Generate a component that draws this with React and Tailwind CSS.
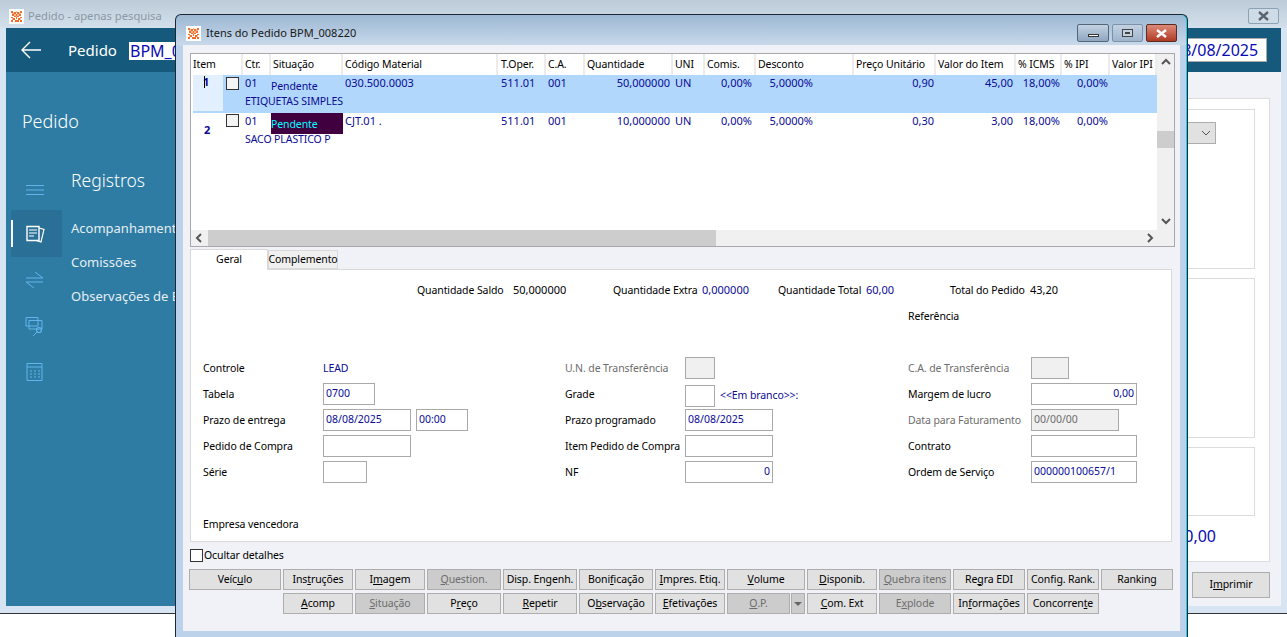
import React from "react";

const COLS = "grid grid-cols-[50px_28px_72px_155px_48px_39px_88px_32px_51px_98px_82px_80px_46px_48px_47px]";

function Logo() {
  const dark = [[2,2],[5,3],[9,3],[12,2],[3,5],[7,5],[11,5],[2,8],[5,7],[9,7],[12,8],[4,10],[7,9],[10,10],[2,12],[6,12],[9,12],[12,12]];
  const light = [[7,2],[3,3],[11,3],[5,5],[9,5],[7,7],[3,10],[11,10],[7,12]];
  return (
    <svg width="15" height="15" viewBox="0 0 16 16" className="shrink-0" shapeRendering="crispEdges">
      <rect width="16" height="16" fill="#fff" />
      {light.map(([x, y], i) => <rect key={"l" + i} x={x} y={y} width="2" height="2" fill="#fbb78f" />)}
      {dark.map(([x, y], i) => <rect key={"d" + i} x={x} y={y} width="2" height="2" fill="#f2702c" />)}
    </svg>
  );
}

function Chev({ d }) {
  const paths = { up: "M2 7 L6 3 L10 7", down: "M2 3 L6 7 L10 3", left: "M7 2 L3 6 L7 10", right: "M3 2 L7 6 L3 10" };
  return (
    <svg width="12" height="12" viewBox="0 0 12 12">
      <path d={paths[d]} stroke="#555" strokeWidth="2" fill="none" />
    </svg>
  );
}

function Head({ children, cls = "" }) {
  return <div className={"h-[21px] flex items-center pt-[1px] pl-[2px] border-r-2 border-[#ececec] whitespace-nowrap overflow-hidden text-black " + cls}>{children}</div>;
}

function Row({ sel, num, code, desc, qty, un, price, total, purple }) {
  const R = ({ children, cls = "" }) => <div className={"text-right whitespace-nowrap " + cls}>{children}</div>;
  return (
    <div className={COLS + " grid-rows-[17px_21px] h-[38px] text-[#0a0a96] text-[11px] tracking-normal leading-[16px] " + (sel ? "bg-[#b1d7fd]" : "bg-white")}>
      <div className="relative flex row-span-2 h-[38px]">
        <div className={"w-[30px] flex font-bold " + (sel ? "bg-[#e1effe] h-[36px] pl-[10px]" : "pt-[9px] pl-[11px]")}>
          <span className={sel ? "mt-[-1px]" : ""}>{num}</span>
        </div>
        <div className={"w-[13px] h-[13px] ml-[3px] border border-[#333] bg-[#f4f4f4] " + (sel ? "mt-[2px]" : "mt-[1px]")} />
        {sel && <div className="absolute left-[11px] top-[1px] w-px h-[12px] bg-black" />}
      </div>
      <div className="pl-[2px]">01</div>
      <div className={"h-[21px] flex items-center text-[10.5px] tracking-[-0.1px] " + (purple ? "bg-[#400040] text-[#00ffff]" : "pt-[1px]")}>Pendente</div>
      <div className="pl-[2px]">{code}</div>
      <div className="pl-[3px]">511.01</div>
      <div className="pl-[2px]">001</div>
      <R cls="pr-[3px]">{qty}</R>
      <div className="pl-[2px]">{un}</div>
      <R cls="pr-[4px]">0,00%</R>
      <R cls="pr-[41px]">5,0000%</R>
      <R cls="pr-[2px]">{price}</R>
      <R cls="pr-[3px]">{total}</R>
      <R cls="pr-[2px]">18,00%</R>
      <R cls="pr-[2px]">0,00%</R>
      <div />
      <div className="col-start-2 col-end-6 row-start-2 pl-[2px] pt-[1px] whitespace-nowrap text-[10.5px] tracking-[-0.1px]">{desc}</div>
    </div>
  );
}

function L({ children, off }) {
  return <div className={"flex items-center h-[22px] pt-[2px] " + (off ? "text-[#6d6d6d]" : "text-black")}>{children}</div>;
}

function Inp({ w, children, right, off }) {
  return (
    <div className={w + " h-[22px] border border-[#a9a9a9] flex items-center px-[2px] shrink-0 tracking-normal " + (right ? "justify-end " : "") + (off ? "bg-[#f0f0f0] text-[#6d6d6d]" : "bg-white text-[#0a0a96]")}>
      {children}
    </div>
  );
}

function Btn({ w, off, children, cls = "" }) {
  return (
    <div className={w + " h-[21px] shrink-0 border border-[#adadad] flex items-center justify-center whitespace-nowrap " + (off ? "bg-[#cccccc] text-[#6d6d6d] " : "bg-[#e1e1e1] text-black ") + cls}>
      {children}
    </div>
  );
}

function Ico({ children }) {
  return (
    <svg width="20" height="20" viewBox="0 0 20 20" fill="none" stroke="#63b4ec" strokeWidth="1">
      {children}
    </svg>
  );
}

export default function App() {
  return (
    <div className="relative w-[1287px] h-[637px] overflow-hidden bg-white font-['Noto_Sans',sans-serif]">
      {/* back window */}
      <div className="h-[614px] border-b border-[#333] bg-[#d7e4f1] flex flex-col px-[6px] pb-[7px]">
        <div className="-mx-[6px] h-[28px] shrink-0 bg-gradient-to-b from-[#bccbd8] to-[#d3e0ec] flex items-center pt-[4px] pl-[9px] pr-[8px] gap-[4px] text-[11.2px] text-[#8a98a6]">
          <Logo />
          <span>Pedido - apenas pesquisa</span>
          <div className="ml-auto w-[31px] h-[16px] border border-[#8ea2b6] rounded-[2px] bg-[#cfdbe7] flex items-center justify-center">
            <svg width="11" height="10" viewBox="0 0 11 10"><path d="M1 1 L10 9 M10 1 L1 9" stroke="#5a6670" strokeWidth="2.4" /></svg>
          </div>
        </div>
        <div className="h-[44px] shrink-0 bg-[#155a7c] flex items-center text-white">
          <svg className="ml-[15px]" width="20" height="18" viewBox="0 0 20 18" fill="none" stroke="#fff" strokeWidth="1.4">
            <path d="M20 9 H1 M9 1 L1 9 L9 17" />
          </svg>
          <span className="ml-[27px] w-[61px] text-[15px]">Pedido</span>
          <div className="w-[60px] h-[18px] bg-white text-[#0a0ab4] text-[16px] leading-[18px] mt-[2px] pl-[1px]">BPM_0</div>
          <div className="ml-auto mr-[14px] w-[100px] h-[24px] bg-white border border-[#a9a9a9] text-[#0a0ab4] text-[16px] flex items-center pl-[5px] whitespace-nowrap">08/08/2025</div>
        </div>
        <div className="flex-1 flex min-h-0">
          <div className="w-[180px] shrink-0 bg-[#2e7ca3] text-white">
            <div className="pl-[16px] pt-[34px] text-[18px] font-light leading-[30px]">Pedido</div>
            <div className="flex mt-[29px]">
              <div className="w-[56px] flex flex-col items-stretch">
                <div className="h-[45px] pl-[20px] pt-[19px]"><svg width="18" height="12" viewBox="0 0 18 12" stroke="#63b4ec"><path d="M0 1.5H18M0 6H18M0 10.5H18" /></svg></div>
                <div className="ml-[5px] h-[47px] bg-[#2a7096] relative flex items-center pl-[15px]">
                  <div className="absolute left-0 top-[10px] w-[2px] h-[27px] bg-white" />
                  <svg width="19" height="18" viewBox="0 0 19 18" fill="none" stroke="#fff">
                    <path d="M1 1.5 H13 V15.5 H1 Z" strokeWidth="1.4" />
                    <path d="M3 5 H11 M3 8 H11 M3 11 H8" strokeWidth="1.2" />
                    <path d="M13 3 L18 4.5 L15 17 L10 15.5" strokeWidth="1.2" />
                  </svg>
                </div>
                <div className="h-[46px] pl-[19px] flex items-center">
                  <Ico><path d="M1 8 H18 M10 2 L18 8 M1 12 H18 M1 12 L9 18" /></Ico>
                </div>
                <div className="h-[46px] pl-[19px] flex items-center">
                  <Ico><path d="M1 1.5 H13 V10 H1 Z M4 4.5 H17 V13 H4 Z" /><circle cx="14" cy="14" r="2.5" strokeWidth="1.2" /><path d="M12 16 L8 20" /></Ico>
                </div>
                <div className="h-[46px] pl-[19px] flex items-center">
                  <Ico><path d="M2 1.5 H17 V18.5 H2 Z M2 5 H17" /><path d="M5 9 H7 M9 9 H11 M13 9 H15 M5 12 H7 M9 12 H11 M13 12 H15 M5 15 H7 M9 15 H11 M13 15 H15" /></Ico>
                </div>
              </div>
              <div className="pl-[9px] mt-[3px] whitespace-nowrap overflow-hidden flex-1 text-[13px] text-[#e4eef4]">
                <div className="text-[17.5px] font-light leading-[24px] text-white">Registros</div>
                <div className="mt-[26px] h-[34px] leading-[20px]">Acompanhamento</div>
                <div className="h-[34px] leading-[20px]">Comissões</div>
                <div className="h-[34px] leading-[20px]">Observações de Entrega</div>
              </div>
            </div>
          </div>
          <div className="flex-1 bg-[#f0f2f8] flex flex-col items-end pr-[11px] pt-[26px]">
            <div className="w-[300px] h-[464px] bg-white border border-[#dcdcdc] pt-[10px] pr-[14px] pl-[10px] flex flex-col gap-[9px]">
              <div className="h-[160px] border border-[#dcdcdc] shrink-0 flex justify-end pt-[12px] pr-[38px]">
                <div className="w-[100px] h-[22px] bg-[#e1e1e1] border border-[#adadad] flex items-center justify-end pr-[3px]">
                  <svg width="12" height="8" viewBox="0 0 12 8" fill="none" stroke="#555"><path d="M2 2 L6 6 L10 2" /></svg>
                </div>
              </div>
              <div className="h-[160px] border border-[#dcdcdc] shrink-0" />
              <div className="h-[69px] border border-[#dcdcdc] shrink-0" />
              <div className="text-right text-[16px] text-[#0a0ab4] leading-[20px] mt-[1px] pr-[39px]">10,00</div>
            </div>
            <div className="w-[78px] mt-[10px] h-[26px] bg-[#e1e1e1] border border-[#adadad] flex items-center justify-center text-[10.5px] tracking-[-0.1px] text-black">
              <span>I<u>m</u>primir</span>
            </div>
          </div>
        </div>
      </div>

      {/* front window */}
      <div className="absolute left-[175px] top-[14px] w-[1013px] h-[623px] rounded-t-[6px] border border-[#1b2733] border-b-0 bg-[linear-gradient(#9cb7d3_0,#c8d9ea_30px,#bcd2ea_30px)] shadow-[inset_-1px_0_0_#00d8f0] px-[7px] overflow-hidden text-[10.5px] tracking-[-0.1px]">
        <div className="h-[30px] flex items-center pt-[6px] pl-[3px] gap-[5px] text-[11px] tracking-normal text-[#1a1a1a]">
          <Logo />
          <span>Itens do Pedido BPM_008220</span>
          <div className="ml-auto flex gap-[3px] mr-[3px]">
            <div className="w-[32px] h-[18px] rounded-[2px] border border-[#54667a] bg-gradient-to-b from-[#c3d2e2] to-[#8fa6bf] flex items-center justify-center">
              <div className="w-[11px] h-[3px] bg-white border border-[#333] mt-[4px]" />
            </div>
            <div className="w-[31px] h-[18px] rounded-[2px] border border-[#7d92a8] bg-gradient-to-b from-[#c3d2e2] to-[#9fb5cc] flex items-center justify-center">
              <div className="w-[11px] h-[8px] border border-[#444] bg-[#c3d2e2] flex items-center justify-center"><div className="w-[5px] h-[2px] border border-[#444]" /></div>
            </div>
            <div className="w-[31px] h-[18px] rounded-[2px] border border-[#5a2a24] bg-gradient-to-b from-[#dc8a78] to-[#b03a22] flex items-center justify-center">
              <svg width="11" height="9" viewBox="0 0 11 9"><path d="M1 1 L10 8 M10 1 L1 8" stroke="#fff" strokeWidth="2.4" /></svg>
            </div>
          </div>
        </div>
        <div className="h-[586px] bg-[#f0f2f8] pl-[7px] pt-[8px]">
          {/* grid */}
          <div className="w-[985px] h-[194px] border border-[#a8a8a8] bg-white flex flex-col">
            <div className="flex-1 flex min-h-0">
              <div className="flex-1 pl-[2px] min-w-0 overflow-hidden">
                <div className={COLS + " h-[21px]"}>
                  <Head cls="!pl-0">Item</Head>
                  <Head>Ctr.</Head>
                  <Head>Situação</Head>
                  <Head>Código Material</Head>
                  <Head cls="!pl-[3px]">T.Oper.</Head>
                  <Head>C.A.</Head>
                  <Head>Quantidade</Head>
                  <Head>UNI</Head>
                  <Head>Comis.</Head>
                  <Head>Desconto</Head>
                  <Head>Preço Unitário</Head>
                  <Head>Valor do Item</Head>
                  <Head>% ICMS</Head>
                  <Head>% IPI</Head>
                  <Head>Valor IPI</Head>
                </div>
                <Row sel num="1" code="030.500.0003" desc="ETIQUETAS SIMPLES" qty="50,000000" un="UN" price="0,90" total="45,00" />
                <Row num="2" purple code="CJT.01 ." desc="SACO PLASTICO P" qty="10,000000" un="UN" price="0,30" total="3,00" />
              </div>
              <div className="w-[17px] shrink-0 bg-[#f0f0f0] flex flex-col items-center">
                <div className="h-[17px] flex items-center justify-center"><Chev d="up" /></div>
                <div className="flex-1 w-full pt-[60px]"><div className="h-[17px] w-full bg-[#cdcdcd]" /></div>
                <div className="h-[17px] flex items-center justify-center"><Chev d="down" /></div>
              </div>
            </div>
            <div className="h-[16px] shrink-0 bg-[#f0f0f0] flex items-center pr-[17px]">
              <div className="w-[17px] flex justify-center"><Chev d="left" /></div>
              <div className="w-[508px] h-full bg-[#cdcdcd]" />
              <div className="ml-auto"><Chev d="right" /></div>
            </div>
          </div>
          {/* tabs */}
          <div className="flex items-end h-[20px] mt-[2px] w-[982px]">
            <div className="w-[78px] h-[21px] -mb-px bg-white border border-b-0 border-[#d9d9d9] flex items-center justify-center relative text-black">Geral</div>
            <div className="w-[70px] h-[19px] bg-[#f0f0f0] border border-[#d9d9d9] flex items-center justify-center text-black">Complemento</div>
          </div>
          {/* page */}
          <div className="w-[982px] h-[273px] bg-white border border-[#d9d9d9] pt-[13px]">
            <div className="grid grid-cols-[96px_100px_89px_76px_88px_84px_80px_auto] ml-[226px] h-[14px] leading-[14px] whitespace-nowrap text-black">
              <span>Quantidade Saldo</span>
              <span className="text-[11px] tracking-normal">50,000000</span>
              <span>Quantidade Extra</span>
              <span className="text-[#0a0a96] text-[11px] tracking-normal">0,000000</span>
              <span>Quantidade Total</span>
              <span className="text-[#0a0a96] text-[11px] tracking-normal">60,00</span>
              <span>Total do Pedido</span>
              <span className="text-[11px] tracking-normal">43,20</span>
            </div>
            <div className="ml-[717px] mt-[12px] h-[14px] leading-[14px] text-black">Referência</div>
            <div className="ml-[12px] mt-[34px] grid grid-cols-[120px_242px_120px_223px_123px_106px] auto-rows-[26px] whitespace-nowrap">
              <L>Controle</L>
              <L><span className="text-[#0a0a96]">LEAD</span></L>
              <L off>U.N. de Transferência</L>
              <div><Inp w="w-[30px]" off /></div>
              <L off>C.A. de Transferência</L>
              <div><Inp w="w-[38px]" off /></div>

              <L>Tabela</L>
              <div><Inp w="w-[52px]">0700</Inp></div>
              <L>Grade</L>
              <div className="flex items-center gap-[5px]"><Inp w="w-[30px]" /><span className="text-[#0a0a96]">&lt;&lt;Em branco&gt;&gt;:</span></div>
              <L>Margem de lucro</L>
              <div><Inp w="w-[106px]" right>0,00</Inp></div>

              <L>Prazo de entrega</L>
              <div className="flex gap-[5px]"><Inp w="w-[88px]">08/08/2025</Inp><Inp w="w-[52px]">00:00</Inp></div>
              <L>Prazo programado</L>
              <div><Inp w="w-[88px]">08/08/2025</Inp></div>
              <L off>Data para Faturamento</L>
              <div><Inp w="w-[88px]" off>00/00/00</Inp></div>

              <L>Pedido de Compra</L>
              <div><Inp w="w-[88px]" /></div>
              <L>Item Pedido de Compra</L>
              <div><Inp w="w-[88px]" /></div>
              <L>Contrato</L>
              <div><Inp w="w-[106px]" /></div>

              <L>Série</L>
              <div><Inp w="w-[44px]" /></div>
              <L>NF</L>
              <div><Inp w="w-[88px]" right>0</Inp></div>
              <L>Ordem de Serviço</L>
              <div><Inp w="w-[106px]">000000100657/1</Inp></div>
            </div>
            <div className="ml-[12px] mt-[30px] h-[14px] leading-[14px] text-black">Empresa vencedora</div>
          </div>
          {/* check */}
          <div className="flex items-center h-[13px] mt-[7px] gap-[1px] text-black">
            <div className="w-[13px] h-[13px] border border-[#333] bg-white" />
            <span>Ocultar detalhes</span>
          </div>
          {/* buttons */}
          <div className="-ml-px mt-[7px] flex gap-[2px]">
            <Btn w="w-[92px]">Veíc<u>u</u>lo</Btn>
            <Btn w="w-[70px]">Ins<u>t</u>ruções</Btn>
            <Btn w="w-[70px]">I<u>m</u>agem</Btn>
            <Btn w="w-[74px]" off><u>Q</u>uestion.</Btn>
            <Btn w="w-[74px]">Disp. Engenh.</Btn>
            <Btn w="w-[74px]">Boni<u>f</u>icação</Btn>
            <Btn w="w-[70px]"><u>I</u>mpres. Etiq.</Btn>
            <Btn w="w-[78px]"><u>V</u>olume</Btn>
            <Btn w="w-[70px]"><u>D</u>isponib.</Btn>
            <Btn w="w-[72px]" off><u>Q</u>uebra itens</Btn>
            <Btn w="w-[72px]">Re<u>g</u>ra EDI</Btn>
            <Btn w="w-[72px]">Config. Rank.</Btn>
            <Btn w="w-[72px]">Ranking</Btn>
          </div>
          <div className="-ml-px pl-[94px] mt-[3px] flex gap-[2px]">
            <Btn w="w-[70px]"><u>A</u>comp</Btn>
            <Btn w="w-[70px]" off><u>S</u>ituação</Btn>
            <Btn w="w-[74px]">P<u>r</u>eço</Btn>
            <Btn w="w-[74px]"><u>R</u>epetir</Btn>
            <Btn w="w-[74px]">O<u>b</u>servação</Btn>
            <Btn w="w-[70px]"><u>E</u>fetivações</Btn>
            <div className="w-[78px] flex gap-px">
              <Btn w="w-[63px]" off><u>O</u>.P.</Btn>
              <Btn w="w-[14px]" off><span className="w-0 h-0 border-x-[4px] border-x-transparent border-t-[4px] border-t-[#666]" /></Btn>
            </div>
            <Btn w="w-[70px]"><u>C</u>om. Ext</Btn>
            <Btn w="w-[72px]" off>E<u>x</u>plode</Btn>
            <Btn w="w-[72px]">In<u>f</u>ormações</Btn>
            <Btn w="w-[72px]">Concorren<u>t</u>e</Btn>
          </div>
        </div>
      </div>
    </div>
  );
}
